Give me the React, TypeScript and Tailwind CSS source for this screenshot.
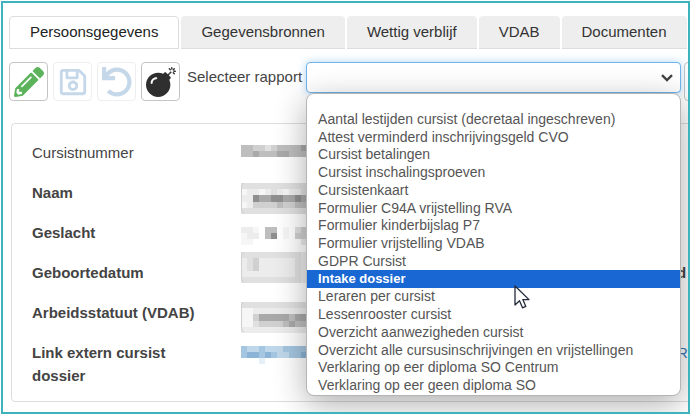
import { useState } from 'react';
import { FaBomb, FaPencilAlt, FaRegSave, FaUndo } from 'react-icons/fa';

const tabs = ['Persoonsgegevens', 'Gegevensbronnen', 'Wettig verblijf', 'VDAB', 'Documenten'];

const reports = [
  'Aantal lestijden cursist (decretaal ingeschreven)',
  'Attest verminderd inschrijvingsgeld CVO',
  'Cursist betalingen',
  'Cursist inschalingsproeven',
  'Cursistenkaart',
  'Formulier C94A vrijstelling RVA',
  'Formulier kinderbijslag P7',
  'Formulier vrijstelling VDAB',
  'GDPR Cursist',
  'Intake dossier',
  'Leraren per cursist',
  'Lessenrooster cursist',
  'Overzicht aanwezigheden cursist',
  'Overzicht alle cursusinschrijvingen en vrijstellingen',
  'Verklaring op eer diploma SO Centrum',
  'Verklaring op eer geen diploma SO',
];

type Field = { label: string; bold: boolean };

const fields: Field[] = [
  { label: 'Cursistnummer', bold: false },
  { label: 'Naam', bold: true },
  { label: 'Geslacht', bold: true },
  { label: 'Geboortedatum', bold: true },
  { label: 'Arbeidsstatuut (VDAB)', bold: true },
  { label: 'Link extern cursist dossier', bold: true },
];

// Redacted values: one string per row of cells, one letter per cell.
const shades: Record<string, string> = {
  a: '#f6f6f6',
  b: '#ececec',
  c: '#e0e0e0',
  d: '#d0d0d0',
  e: '#bebebe',
  f: '#a9a9a9',
  g: '#8f8f8f',
  p: '#e6f0f8',
  q: '#bfd7ea',
  r: '#a5c6e0',
  s: '#8bb4d6',
};

type MosaicProps = { label: string; rows: string[]; height: number; boxed?: boolean; className: string };

function Mosaic({ label, rows, height, boxed, className }: MosaicProps) {
  const cell = height / rows.length;
  return (
    <svg role="img" aria-label={label} width="66" height={height} viewBox={`0 0 66 ${height}`} className={className} shapeRendering="crispEdges">
      {rows.map((row, y) =>
        row.split('').map((c, x) =>
          shades[c] ? <rect key={`${x}-${y}`} x={x * 6} y={y * cell} width="6" height={cell} fill={shades[c]} /> : null,
        ),
      )}
      {boxed && <path d={`M3 0Q.5 0 .5 4V${height - 5}Q.5 ${height - 1} 3 ${height - 1}`} fill="none" stroke="#cfcfcf" shapeRendering="auto" />}
    </svg>
  );
}

const toolButton = 'flex size-[39px] shrink-0 items-center justify-center rounded border bg-white';

export default function App() {
  const [tab, setTab] = useState('Persoonsgegevens');
  const [report, setReport] = useState('');

  return (
    <div className="bg-white p-px font-['Liberation_Sans',Arial,sans-serif] text-[15px] text-[#444]">
      <main className="overflow-hidden border-2 border-[#3fb3bd] pt-[13px] pb-2.5 pl-1.5">
        <nav role="tablist" className="flex gap-[2px]">
          {tabs.map((name) => (
            <button
              key={name}
              role="tab"
              type="button"
              aria-selected={tab === name}
              onClick={() => setTab(name)}
              className={`h-[33px] shrink-0 rounded-t px-5 whitespace-nowrap ${
                tab === name ? 'border border-[#ddd] bg-white text-[#222]' : 'border-b border-[#ddd] bg-[#eee] text-[#333]'
              }`}
            >
              {name}
            </button>
          ))}
        </nav>

        <div className="mt-[13px] flex items-start">
          <div className="flex gap-[5px]">
            <button type="button" aria-label="Bewerken" className={`${toolButton} border-[#c4c4c4] text-[#5cb35c]`}>
              <FaPencilAlt size={30} />
            </button>
            <button type="button" aria-label="Opslaan" className={`${toolButton} border-[#eee] text-[#c5d8e9]`}>
              <FaRegSave size={30} />
            </button>
            <button type="button" aria-label="Ongedaan maken" className={`${toolButton} border-[#eee] text-[#c5d8e9]`}>
              <FaUndo size={30} />
            </button>
            <button type="button" aria-label="Verwijderen" className={`${toolButton} border-[#c4c4c4] text-[#2f2f2f]`}>
              <FaBomb size={30} />
            </button>
          </div>
          <label htmlFor="rapport" className="ml-[7px] shrink-0 leading-[30px] whitespace-nowrap">
            Selecteer rapport
          </label>
          <div className="relative z-10 mr-[3px] ml-1 flex-1">
            <select
              id="rapport"
              value={report}
              onChange={(e) => setReport(e.target.value)}
              className="block h-[31px] w-full appearance-none rounded border border-[#6fb3ea] bg-white px-3 text-sm shadow-[0_0_8px_rgba(102,175,233,0.5)] outline-none"
            >
              <option value=""></option>
              {reports.map((name) => (
                <option key={name}>{name}</option>
              ))}
            </select>
            <svg viewBox="0 0 12 8" className="pointer-events-none absolute top-[12px] right-2 h-2 w-3" fill="none" stroke="#444" strokeWidth="2.4">
              <path d="M1 1.2 6 6l5-4.8" />
            </svg>
            <div className="absolute top-full right-0 left-0 rounded-lg border border-[#b5b5b5] bg-white pb-px shadow-[0_8px_32px_rgba(0,0,0,0.32)]">
              <ul role="listbox" aria-label="Rapporten" className="grid h-[300px] grid-rows-[16px_repeat(16,minmax(0,1fr))] text-sm text-[#555]">
                <li role="option" aria-selected={false} />
                {reports.map((name) => (
                  <li
                    key={name}
                    role="option"
                    aria-selected={name === 'Intake dossier'}
                    onClick={() => setReport(name)}
                    className={`flex items-center px-[11px] leading-4 whitespace-nowrap ${
                      name === 'Intake dossier' ? 'bg-[#1967d2] text-[13px] font-bold text-white' : ''
                    }`}
                  >
                    {name}
                  </li>
                ))}
              </ul>
              <svg viewBox="0 0 16 24" className="absolute top-[191px] left-[207px] h-6 w-4" fill="#fff" stroke="#222a3c" strokeWidth="1.3" strokeLinejoin="round">
                <path d="M1 1v19l4.500-4.200 3 7 3.300-1.400-3-6.800H15z" />
              </svg>
            </div>
          </div>
          <button type="button" aria-label="Volgende" className={`${toolButton} -mr-[35px] border-[#c4c4c4]`} />
        </div>

        <section className="mt-[22px] -mr-3 ml-[2px] flex rounded border border-[#ddd] pt-[17px] pl-5">
          <div className="w-[209px] shrink-0 pb-[14px]">
            {fields.map(({ label, bold }) => (
              <p key={label} className={`mb-[17px] w-[180px] leading-[23px] last:mb-0 ${bold ? 'font-bold' : ''}`}>
                {label}
              </p>
            ))}
          </div>
          <div className="flex flex-1 flex-col">
            <Mosaic label="Cursistnummer" height={12} className="mt-[4px]" rows={['eeddcdeeeef', 'eefeeeffeee']} />
            <Mosaic label="Naam" height={31} boxed className="mt-[26px]" rows={['ccccccccccc', 'abbabcbabbc', 'bbgffggffgf', 'abddddeddee', 'ccccccccccc']} />
            <Mosaic label="Geslacht" height={18} className="mt-[13px]" rows={['bba-ee-a-cd', 'abb-eg-a-dd', 'aa--------b']} />
            <Mosaic label="Geboortedatum" height={31} boxed className="mt-[7px]" rows={['ccccccccccb', 'bcdbbbbbbcb', 'bcdbbbbbbcb', 'bbbbbbbbbcb', 'ccccccccccb']} />
            <Mosaic label="Arbeidsstatuut" height={31} boxed className="mt-[19px]" rows={['ccccccccccc', 'aabbbbbbbbb', 'aadfffffeff', 'aacddddefee', 'bbbbbbbbbbb']} />
            <Mosaic label="Link extern cursist dossier" height={18} className="mt-[13px]" rows={['rqqrqqqrrrr', 'rssrsrqqrrs', '---p-------']} />
          </div>
          <div className="flex w-[22px] shrink-0 flex-col items-start pt-[120px] leading-[23px]">
            <span className="font-bold">d</span>
            <a href="#extern" className="mt-[57px] text-[#3a7ab8]">
              RI
            </a>
          </div>
        </section>
      </main>
    </div>
  );
}
